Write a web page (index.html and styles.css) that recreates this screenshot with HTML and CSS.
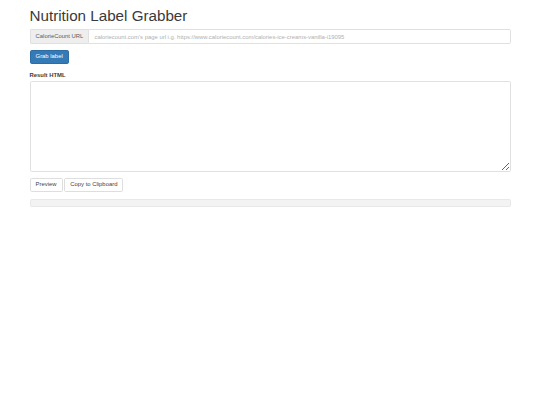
FILE: index.html
```html
<!DOCTYPE html>
<html lang="en">
<head>
<meta charset="utf-8">
<title>Nutrition Label Grabber</title>
<link rel="stylesheet" href="styles.css">
</head>
<body>
<div class="container">
  <h1 class="title">Nutrition Label Grabber</h1>
  <div class="form-group">
    <div class="input-group">
      <span class="addon">CalorieCount URL</span>
      <input class="url-input" type="text" placeholder="caloriecount.com's page url i.g. https://www.caloriecount.com/calories-ice-creams-vanilla-i19095">
    </div>
  </div>
  <div class="form-group">
    <button class="btn btn-primary" type="button">Grab label</button>
  </div>
  <div class="form-group">
    <label class="field-label" for="result">Result HTML</label>
    <textarea id="result" class="result"></textarea>
  </div>
  <div class="form-group actions">
    <button class="btn btn-default" type="button">Preview</button>
    <button class="btn btn-default" type="button">Copy to Clipboard</button>
  </div>
  <div class="progress"></div>
</div>
</body>
</html>
```

FILE: styles.css
```css
* {
  box-sizing: border-box;
}

html, body {
  margin: 0;
  padding: 0;
  background: #fff;
}

body {
  font-family: "Liberation Sans", Arial, Helvetica, sans-serif;
  font-size: 5.9px;
  line-height: 8.44px;
  color: #3a3a3a;
}

.container {
  width: 481px;
  margin: 0 auto;
}

.title {
  margin: 8.44px 0 4.22px;
  font-size: 15.19px;
  font-weight: 500;
  line-height: 1.1;
  color: #3a3a3a;
}

.form-group {
  margin-bottom: 6.33px;
}

.input-group {
  display: flex;
  height: 14.34px;
}

.addon {
  display: flex;
  align-items: center;
  padding: 0 5.06px;
  background: #eee;
  border: 1px solid #e0e0e0;
  border-right: 0;
  border-radius: 1.7px 0 0 1.7px;
  color: #5a5a5a;
  font-size: 5.9px;
  white-space: nowrap;
}

.url-input {
  flex: 1;
  min-width: 0;
  height: 100%;
  margin: 0;
  padding: 0 5.06px;
  border: 1px solid #e0e0e0;
  border-radius: 0 1.7px 1.7px 0;
  font-family: inherit;
  font-size: 5.9px;
  color: #555;
  background: #fff;
  outline: none;
}

.url-input::placeholder {
  color: #b0b0b0;
}

.btn {
  display: inline-flex;
  align-items: center;
  justify-content: center;
  height: 14.34px;
  margin: 0;
  padding: 0 5.06px;
  border: 1px solid transparent;
  border-radius: 1.7px;
  font-family: inherit;
  font-size: 5.9px;
  line-height: 1;
  cursor: pointer;
}

.btn-primary {
  background: #337ab7;
  border-color: #2e6da4;
  color: #fff;
}

.btn-default {
  background: #fff;
  border-color: #dedede;
  color: #444;
}

.actions {
  display: flex;
  gap: 1.7px;
}

.field-label {
  display: block;
  margin-bottom: 2.11px;
  font-weight: 700;
  line-height: 8.44px;
}

.result {
  display: block;
  width: 100%;
  height: 90.3px;
  margin: 0;
  padding: 2.5px 5.06px;
  border: 1px solid #e0e0e0;
  border-radius: 1.7px;
  font-family: inherit;
  font-size: 5.9px;
  resize: vertical;
  background: #fff;
}

.progress {
  height: 8.44px;
  margin-bottom: 8.44px;
  background: #f3f3f3;
  border: 1px solid #e8e8e8;
  border-radius: 1.7px;
}
```
